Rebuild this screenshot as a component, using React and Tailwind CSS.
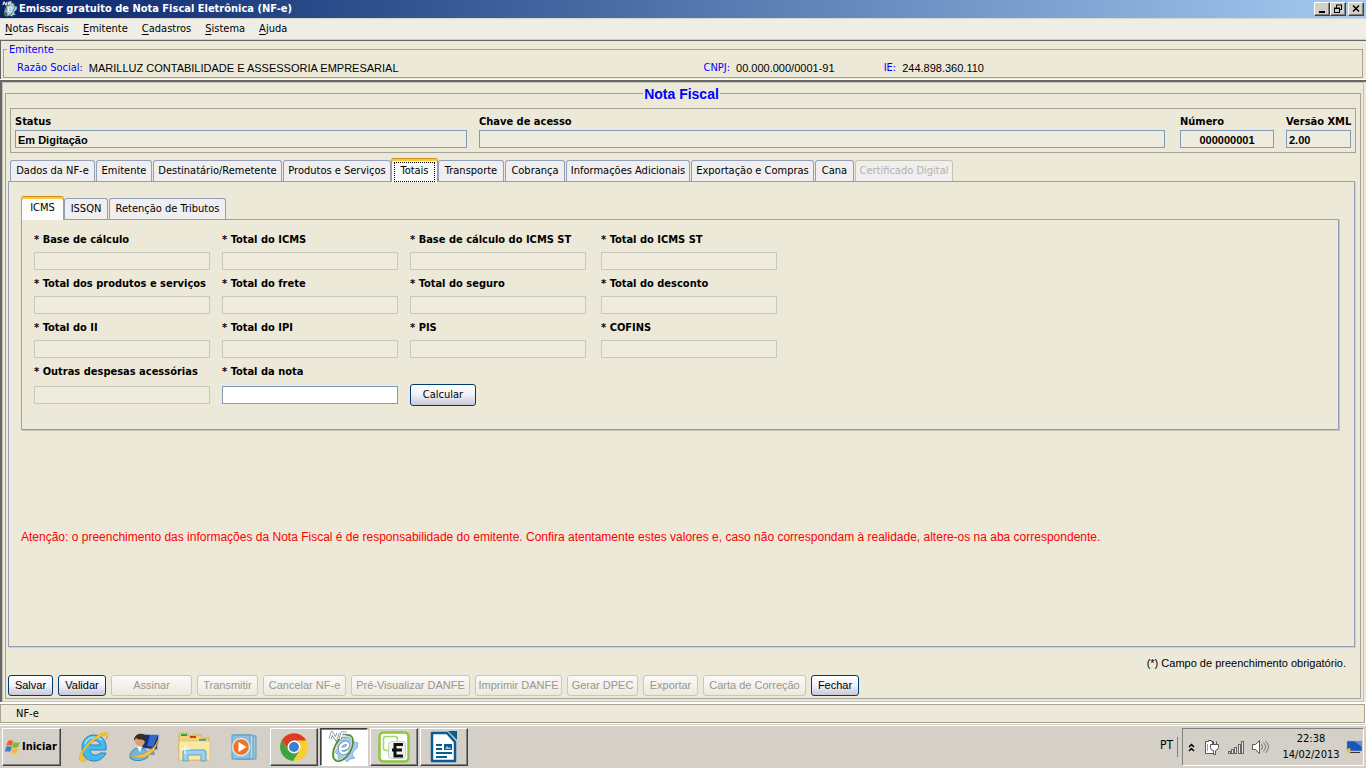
import { useState } from 'react';
import clsx from 'clsx';

const mainTabs = [
    { name: 'Dados da NF-e', width: 'w-[85px]' },
    { name: 'Emitente', width: 'w-[56px]' },
    { name: 'Destinatário/Remetente', width: 'w-[129px]' },
    { name: 'Produtos e Serviços', width: 'w-[108px]' },
    { name: 'Totais', width: 'w-[47px]' },
    { name: 'Transporte', width: 'w-[66px]' },
    { name: 'Cobrança', width: 'w-[60px]' },
    { name: 'Informações Adicionais', width: 'w-[124px]' },
    { name: 'Exportação e Compras', width: 'w-[123px]' },
    { name: 'Cana', width: 'w-[39px]' },
    { name: 'Certificado Digital', width: 'w-[98px]', disabled: true },
];

const totalTabs = [
    { name: 'ICMS', width: 'w-[43px]' },
    { name: 'ISSQN', width: 'w-[44px]' },
    { name: 'Retenção de Tributos', width: 'w-[117px]' },
];

const fields = [
    'Base de cálculo', 'Total do ICMS', 'Base de cálculo do ICMS ST', 'Total do ICMS ST',
    'Total dos produtos e serviços', 'Total do frete', 'Total do seguro', 'Total do desconto',
    'Total do II', 'Total do IPI', 'PIS', 'COFINS',
];

const actions = [
    { name: 'Salvar', width: 'w-[45px]', enabled: true },
    { name: 'Validar', width: 'w-[48px]', enabled: true },
    { name: 'Assinar', width: 'w-[81px]' },
    { name: 'Transmitir', width: 'w-[61px]' },
    { name: 'Cancelar NF-e', width: 'w-[83px]' },
    { name: 'Pré-Visualizar DANFE', width: 'w-[119px]' },
    { name: 'Imprimir DANFE', width: 'w-[87px]' },
    { name: 'Gerar DPEC', width: 'w-[71px]' },
    { name: 'Exportar', width: 'w-[55px]' },
    { name: 'Carta de Correção', width: 'w-[103px]' },
    { name: 'Fechar', width: 'w-[48px]', enabled: true },
];

const raised = 'bg-[#d4d0c8] border border-t-white border-l-white border-r-[#404040] border-b-[#404040] shadow-[inset_-1px_-1px_0_#808080]';
const arial = "font-['Liberation_Sans',Arial,sans-serif]";

function NfeLogo({ className }) {
    return (
        <svg viewBox="0 0 32 32" className={className}>
            <path d="M9 10l6-1 3-4 4 1 1 4 7 2-1 5-4 4-1 3 3 3-5 1-3 3-3-3-5 1-1-5-3-3 3-4z" fill="#a9c9f2" stroke="#86aee4" />
            <ellipse cx="15" cy="17" rx="8" ry="14.500" transform="rotate(30 15 17)" fill="none" stroke="#4f8a34" strokeWidth="1.800" />
            <ellipse cx="15" cy="17" rx="6.600" ry="13" transform="rotate(30 15 17)" fill="none" stroke="#c9dfae" />
            <path d="M12 18c6 0 9-2 8-5-2-3-8 0-8 5 0 5 5 5 8 2" fill="none" stroke="#6a92bd" strokeWidth="4" />
            <path d="M12 18c6 0 9-2 8-5-2-3-8 0-8 5 0 5 5 5 8 2" fill="none" stroke="#fff" strokeWidth="2.400" />
            <path d="M2 8l2-6 4 6 2-6M12 8l2-6h5M13 5h5" fill="none" stroke="#7b8794" strokeWidth="3" />
            <path d="M2 8l2-6 4 6 2-6M12 8l2-6h5M13 5h5" fill="none" stroke="#fff" strokeWidth="1.500" />
        </svg>
    );
}

function WindowButton({ label, children }) {
    return (
        <button aria-label={label} className={clsx(raised, 'w-4 h-[14px] flex items-center justify-center')}>
            <svg viewBox="0 0 12 10" className="w-3 h-[10px]" fill="none" stroke="#000">{children}</svg>
        </button>
    );
}

function Tabs({ tabs, active, onSelect }) {
    return (
        <div role="tablist" className="flex items-end gap-px h-[23px]">
            {tabs.map(tab => {
                const selected = tab.name === active;
                return (
                    <button
                        key={tab.name}
                        role="tab"
                        aria-selected={selected}
                        disabled={tab.disabled}
                        onClick={() => onSelect(tab.name)}
                        className={clsx(
                            'shrink-0 border border-b-0 rounded-t-[3px] whitespace-nowrap flex items-center justify-center',
                            tab.width,
                            selected
                                ? 'relative z-10 h-6 -mx-px -mb-px bg-[#fcfcfa] border-[#91a0b8] border-t-[#c88f1c] shadow-[inset_0_2px_0_#ffc73c]'
                                : 'h-[21px] bg-[#f0eeee] border-[#91a0b8] pt-px',
                            tab.disabled && 'text-[#b4b2a8] border-[#c5c3b6]'
                        )}
                    >
                        {selected && tab.name === 'Totais'
                            ? <span className="w-full mx-[2px] h-5 leading-4 border border-dotted border-black mt-[2px]">{tab.name}</span>
                            : tab.name}
                    </button>
                );
            })}
        </div>
    );
}

function HeaderField({ id, label, value, className, inputClass }) {
    return (
        <div className={className}>
            <label htmlFor={id} className="block h-4 leading-4 font-bold whitespace-nowrap">{label}</label>
            <input
                id={id}
                readOnly
                defaultValue={value}
                className={clsx(arial, 'block w-full h-[18px] px-[2px] pt-[2px] border border-[#7f9db9] bg-[#f0ebdf] text-[11px] font-bold', inputClass)}
            />
        </div>
    );
}

function AmountField({ label, editable }) {
    const id = label.toLowerCase().replaceAll(' ', '-');
    return (
        <div className={clsx('flex flex-col', editable === undefined ? 'gap-1' : 'gap-[6px]')}>
            <label htmlFor={id} className="h-4 leading-4 font-bold whitespace-nowrap">* {label}</label>
            <input
                id={id}
                disabled={!editable}
                className={clsx('w-44 h-[18px] border px-1', editable ? 'bg-white border-[#7f9db9]' : 'bg-[#efebde] border-[#c9c7ba]')}
            />
        </div>
    );
}

function TaskButton({ label, open, active, children }) {
    return (
        <button
            aria-label={label}
            className={clsx(
                'w-12 h-[38px] flex items-center justify-center',
                open && raised,
                active && 'bg-white border border-t-[#404040] border-l-[#404040] border-r-white border-b-white shadow-[inset_1px_1px_0_#808080]'
            )}
        >
            {children}
        </button>
    );
}

function Taskbar() {
    return (
        <footer className="h-11 bg-[#d4d0c8] border-t border-[#d4d0c8] shadow-[inset_0_1px_0_#fff] flex items-center pt-px px-[2px]">
            <button className={clsx(raised, 'w-[59px] h-[38px] mr-[9px] flex items-center pl-[2px] gap-px font-bold')}>
                <svg viewBox="0 0 16 16" className="w-4 h-4">
                    <path d="M3 2c2-1 3-1 5 0L7 7C5 6 4 6 1 7z" fill="#e8622c" />
                    <path d="M9 3c2 1 3 1 6 0l-2 5c-2 1-4 1-6 0z" fill="#7db83b" />
                    <path d="M1 8c2-1 4-1 6 0l-2 5c-2-1-3-1-5 0z" fill="#3b82c9" />
                    <path d="M7 9c2 1 4 1 6 0l-1 5c-2 1-4 1-6 0z" fill="#f7bd2b" />
                </svg>
                Iniciar
            </button>
            <nav className="flex gap-[2px]">
                <TaskButton label="Internet Explorer">
                    <svg viewBox="0 0 32 32" className="w-8 h-8" fill="none">
                        <path d="M4 17C4 9 9 4 16 4c9 0 13 7 12 15H12c0 5 7 7 10 3h6c-3 6-7 8-12 8C9 30 4 25 4 17z" fill="#45b9ee" stroke="#1a86c8" />
                        <path d="M12 14c1-6 9-6 10 0z" fill="#d4d0c8" stroke="#1a86c8" />
                        <path d="M7 13c2-7 11-9 17-4" stroke="#a5e4fb" strokeWidth="1.500" />
                        <path d="M3 30C-3 26 12 6 25 2c6-2 6 3 3 7 2-6-1-5-4-4C14 9 0 23 6 28q2 1 5 0-5 4-8 2z" fill="#fbc82d" stroke="#dca012" strokeWidth="0.6" />
                    </svg>
                </TaskButton>
                <TaskButton label="Suporte">
                    <svg viewBox="0 0 32 32" className="w-8 h-8">
                        <path d="M14 3l17 1-2 15-15-2z" fill="#13327d" stroke="#a8b4c4" />
                        <path d="M22 4h8l-5 12-6-1z" fill="#3767c2" />
                        <path d="M21 19l5 1 1 4h-8z" fill="#8b939b" />
                        <path d="M2 27c0-8 5-10 9-10 6 0 9 3 9 9-4 4-14 5-18 1z" fill="#6fb7df" stroke="#3b83b4" />
                        <path d="M9 16h5l-2 5z" fill="#fff" />
                        <circle cx="12" cy="10" r="5" fill="#d9a06c" />
                        <path d="M6 10c-1-8 11-10 12-3l-1 4c-2-4-6-1-9-4z" fill="#3b2b1f" />
                        <path d="M1 23c8 4 23 0 29-14-3 17-19 22-29 14z" fill="#f8c43c" stroke="#cf9419" strokeWidth="0.5" />
                    </svg>
                </TaskButton>
                <TaskButton label="Explorador de arquivos">
                    <svg viewBox="0 0 34 32" className="w-[34px] h-8">
                        <path d="M2 5l1-3h8l1 3h2l1-1h9l1 3h7v22H2z" fill="#f0d377" stroke="#d5ae45" />
                        <path d="M4 3h6v2H4z" fill="#20a83e" />
                        <path d="M13 5h6v2h-6z" fill="#cf3a20" />
                        <path d="M22 8h7v2h-7z" fill="#3092df" />
                        <path d="M2 10h31v19H2z" fill="#fae8a4" stroke="#dfc067" strokeWidth="0.7" />
                        <path d="M6 30v-9q0-2 2-2h19q2 0 2 2v9h-5v-6H11v6z" fill="#9ed0ee" stroke="#58a4d1" />
                        <path d="M8 14v9M3 18h10" stroke="#fff" />
                    </svg>
                </TaskButton>
                <TaskButton label="Media Player">
                    <svg viewBox="0 0 32 32" className="w-8 h-8">
                        <path d="M10 5h18v23H10z" fill="#9ec8de" stroke="#619ab8" />
                        <path d="M7 4h18v24H7z" fill="#b8dced" stroke="#619ab8" />
                        <path d="M4 4h18v24H4z" fill="#8bc0de" stroke="#5b9bbf" />
                        <circle cx="13" cy="16" r="8.500" fill="#ef7325" stroke="#d9eaf2" strokeWidth="1.500" />
                        <path d="M10.500 11l8 5-8 5z" fill="#fff" />
                    </svg>
                </TaskButton>
                <TaskButton label="Google Chrome" open>
                    <svg viewBox="0 0 28 28" className="w-7 h-7">
                        <circle cx="14" cy="14" r="14" fill="#f9cf2f" />
                        <path d="M1.900 7A14 14 0 0 1 26.100 7.500H14L8 17z" fill="#dc3a2b" />
                        <path d="M1.900 7A14 14 0 0 0 13 28l6.500-10.500H8z" fill="#3ba345" />
                        <circle cx="14" cy="14" r="6.500" fill="#fff" />
                        <circle cx="14" cy="14" r="5" fill="#3f7fd0" />
                    </svg>
                </TaskButton>
                <TaskButton label="Emissor NF-e" active><NfeLogo className="w-8 h-8" /></TaskButton>
                <TaskButton label="Emissor" open>
                    <svg viewBox="0 0 32 32" className="w-8 h-8" fill="none">
                        <rect x="1.500" y="1.500" width="29" height="29" rx="4" fill="#fff" stroke="#8cc63f" strokeWidth="2.500" />
                        <rect x="5.500" y="5.500" width="14" height="14" rx="2.500" stroke="#a6d46f" strokeWidth="1.500" />
                        <rect x="10.500" y="10.500" width="17" height="17" rx="3" fill="#eef3ea" stroke="#c6cec0" />
                        <path d="M25 13.500h-8V25h8M14 19h10" stroke="#111" strokeWidth="3" />
                    </svg>
                </TaskButton>
                <TaskButton label="LibreOffice Writer" open>
                    <svg viewBox="0 0 28 32" className="w-7 h-8">
                        <path d="M2 2h15l8 9v19H2z" fill="#fff" stroke="#0b5b93" strokeWidth="2.500" strokeLinejoin="round" />
                        <path d="M18 0h9v9z" fill="#0b5b93" />
                        <path d="M6 13h6v2H6zM6 17h6v2H6zM6 21h16v2H6zM6 25h11v2H6z" fill="#0b5b93" />
                        <path d="M14 13h8v6h-8z" fill="#0b5b93" />
                        <path d="M15 18l2-3 2 2 1-1 1 2z" fill="#9cc9e8" />
                    </svg>
                </TaskButton>
            </nav>

            <span className="ml-auto pr-1 h-5 leading-4 text-[12px] border-r border-[#808080] mr-1">PT</span>
            <div className="flex items-center h-[38px] w-[182px] pl-[5px] border border-t-[#808080] border-l-[#808080] border-r-white border-b-white">
                <svg viewBox="0 0 7 9" className="w-[7px] h-[9px] mr-[9px]" fill="none" stroke="#000" strokeWidth="1.500">
                    <path d="M1 4l2.500-2.500L6 4M1 8l2.500-2.500L6 8" />
                </svg>
                <svg viewBox="0 0 16 16" className="w-4 h-4 mr-2" fill="#fff" stroke="#555">
                    <path d="M1.500 2.500h3v-1h3v1h2v12h-8z" />
                    <path d="M3.500 5v7" stroke="#999" />
                    <path d="M6.500 5.500h8v3q-1 3-3 3v4h-2v-4q-3 0-3-3zM8.500 5.500v-3M12.500 5.500v-3" />
                </svg>
                <svg viewBox="0 0 16 14" className="w-4 h-[14px] mr-2" fill="#e8e8e8" stroke="#666" shapeRendering="crispEdges">
                    <path d="M.5 11.500h2v2h-2zM3.500 9.500h2v4h-2zM6.500 7.500h2v6h-2zM10.500 4.500h2v9h-2zM13.500 1.500h2v12h-2z" />
                </svg>
                <svg viewBox="0 0 17 16" className="w-[17px] h-4 mr-3" fill="none" stroke="#777">
                    <path d="M.5 5.500h3l4-4v13l-4-4h-3z" fill="#fff" stroke="#555" />
                    <path d="M9.500 5q2 3 0 6M11.500 3.500q4 4.500 0 9M13.500 2q6 6 0 12" />
                </svg>
                <div className="w-[60px] leading-4 flex flex-col items-center">
                    <span>22:38</span>
                    <span>14/02/2013</span>
                </div>
                <svg viewBox="0 0 16 14" className="w-4 h-[14px] ml-auto mr-px">
                    <path d="M1 1h15v10H1z" fill="#1b57b8" stroke="#93aed8" strokeWidth="0.5" />
                    <path d="M8 1h8v6z" fill="#5b96e2" />
                    <path d="M4 12h10v1H4z" fill="#333" />
                    <path d="M1 9l3-1 1 4-3 1z" fill="#f2c437" />
                </svg>
            </div>
        </footer>
    );
}

export default function App() {
    const [tab, setTab] = useState('Totais');
    const [totalTab, setTotalTab] = useState('ICMS');

    return (
        <div className="min-h-screen flex flex-col bg-[#ece9d8] text-black text-[11px] font-['DejaVu_Sans_Condensed','DejaVu_Sans',sans-serif]">
            {/* Title bar */}
            <header className="h-[18px] flex items-center px-[2px] bg-linear-to-r from-[#0a246a] to-[#a6caf0]">
                <NfeLogo className="w-4 h-4 mr-px" />
                <h1 className="text-white font-bold leading-4">Emissor gratuito de Nota Fiscal Eletrônica (NF-e)</h1>
                <div className="ml-auto flex">
                    <WindowButton label="Minimizar"><path d="M3 8h6" strokeWidth="2" /></WindowButton>
                    <WindowButton label="Restaurar">
                        <path d="M4 1h6M4.500 1v3M9.500 1v5M8 5.500h2M2 4.500h6M2 4h6M2.500 4v5M7.500 4v5M2 8.500h6" />
                    </WindowButton>
                    <span className="w-[2px]" />
                    <WindowButton label="Fechar janela"><path d="M3 1.500l6 6M9 1.500l-6 6" strokeWidth="1.500" /></WindowButton>
                </div>
            </header>

            <nav className="h-[22px] pt-px flex items-center gap-[14px] px-[5px] bg-[#eeeee6] border-t border-b border-t-[#d9d5c9] border-b-[#d0cdc0]">
                {['Notas Fiscais', 'Emitente', 'Cadastros', 'Sistema', 'Ajuda'].map(item => (
                    <button key={item} className="underline-offset-2"><u>{item[0]}</u>{item.slice(1)}</button>
                ))}
            </nav>

            {/* Issuer */}
            <section className="h-10 border-t border-l border-[#666] pl-[2px] pr-[3px]">
                <fieldset className="border border-[#a5a293] h-[37px] pl-[13px]">
                    <legend className="-ml-[10px] px-[2px] h-4 leading-[18px] text-[#0000ff]">Emitente</legend>
                    <dl className="grid grid-cols-[686fr_180fr_478fr] leading-4 pt-[3px]">
                        <div className="flex gap-[6px]">
                            <dt className="text-[#0000ff]">Razão Social:</dt>
                            <dd className={arial}>MARILLUZ CONTABILIDADE E ASSESSORIA EMPRESARIAL</dd>
                        </div>
                        <div className="flex gap-[6px]">
                            <dt className="text-[#0000ff]">CNPJ:</dt>
                            <dd className={arial}>00.000.000/0001-91</dd>
                        </div>
                        <div className="flex gap-[6px]">
                            <dt className="text-[#0000ff]">IE:</dt>
                            <dd className={arial}>244.898.360.110</dd>
                        </div>
                    </dl>
                </fieldset>
            </section>

            <main className="flex-1 flex flex-col border-t-2 border-l-2 border-[#666] shadow-[0_-1px_0_#fff]">
                <div className="flex-1 flex flex-col border border-[#c5c3b6] mr-[2px] px-[2px] pt-[10px] pb-[2px]">
                    <section className="flex-1 flex flex-col border border-[#a5a293] pl-[2px] pr-[5px]">
                        <h2 className={clsx(arial, 'self-center -mt-2 px-px h-4 leading-4 text-[14px] font-bold text-[#0000ff] bg-[#ece9d8]')}>Nota Fiscal</h2>

                        <div className="mt-[6px] ml-[2px] -mr-px border border-[#a5a293] grid grid-cols-[452fr_689fr_94px_65px] gap-x-3 px-1 pt-[5px] pb-1">
                            <HeaderField id="status" label="Status" value="Em Digitação" />
                            <HeaderField id="chave" label="Chave de acesso" className="pr-[3px]" />
                            <HeaderField id="numero" label="Número" value="000000001" inputClass="text-center" />
                            <HeaderField id="versao" label="Versão XML" value="2.00" />
                        </div>

                        <div className="mt-[5px] pl-[2px]">
                            <Tabs tabs={mainTabs} active={tab} onSelect={setTab} />
                        </div>
                        <div className="flex-1 border border-[#91a0b8] shadow-[1px_1px_0_#d3d0c2] pl-3 pr-[15px] pt-[14px]">
                            <div className="pl-px">
                                <Tabs tabs={totalTabs} active={totalTab} onSelect={setTotalTab} />
                            </div>
                            <form className="border border-[#91a0b8] shadow-[1px_1px_0_#c5c3b6] pl-3 pt-3 pb-[25px]" onSubmit={e => e.preventDefault()}>
                                <div className="grid grid-cols-[176px_176px_179px_176px] gap-x-3 gap-y-[6px]">
                                    {fields.map(field => <AmountField key={field} label={field} />)}
                                    <AmountField label="Outras despesas acessórias" editable={false} />
                                    <AmountField label="Total da nota" editable />
                                    <button className="self-end -mb-[2px] w-[66px] h-[22px] rounded-[3px] border border-[#003c74] bg-linear-to-b from-white via-[#f0f0f8] to-[#c8c8d8]">
                                        Calcular
                                    </button>
                                </div>
                            </form>
                            <p className={clsx(arial, 'mt-[99px] text-[12px] leading-4 text-[#ff0000]')}>
                                Atenção: o preenchimento das informações da Nota Fiscal é de responsabilidade do emitente. Confira atentamente estes valores e, caso não correspondam à realidade, altere-os na aba correspondente.
                            </p>
                        </div>

                        <p className={clsx(arial, 'mt-2 pr-[9px] h-4 leading-4 text-right')}>(*) Campo de preenchimento obrigatório.</p>
                        <div className={clsx(arial, 'flex gap-[5px] mt-1 mb-[2px]')}>
                            {actions.map(action => (
                                <button
                                    key={action.name}
                                    disabled={!action.enabled}
                                    className={clsx(
                                        'h-[21px] rounded-[3px] border whitespace-nowrap shrink-0',
                                        action.width,
                                        action.enabled
                                            ? 'border-[#003c74] bg-linear-to-b from-white via-[#f0f0f8] to-[#c8c8d8]'
                                            : 'border-[#c9c7ba] bg-linear-to-b from-[#fbfaf6] to-[#ebe9df] text-[#99978c]'
                                    )}
                                >
                                    {action.name}
                                </button>
                            ))}
                        </div>
                    </section>
                </div>
            </main>

            <div className="h-[22px] pt-[2px] pb-px bg-white">
                <div className="h-[19px] bg-[#ece9d8] border border-[#a5a293] mr-px pl-[15px] leading-[18px]">NF-e</div>
            </div>
            <Taskbar />
        </div>
    );
}
